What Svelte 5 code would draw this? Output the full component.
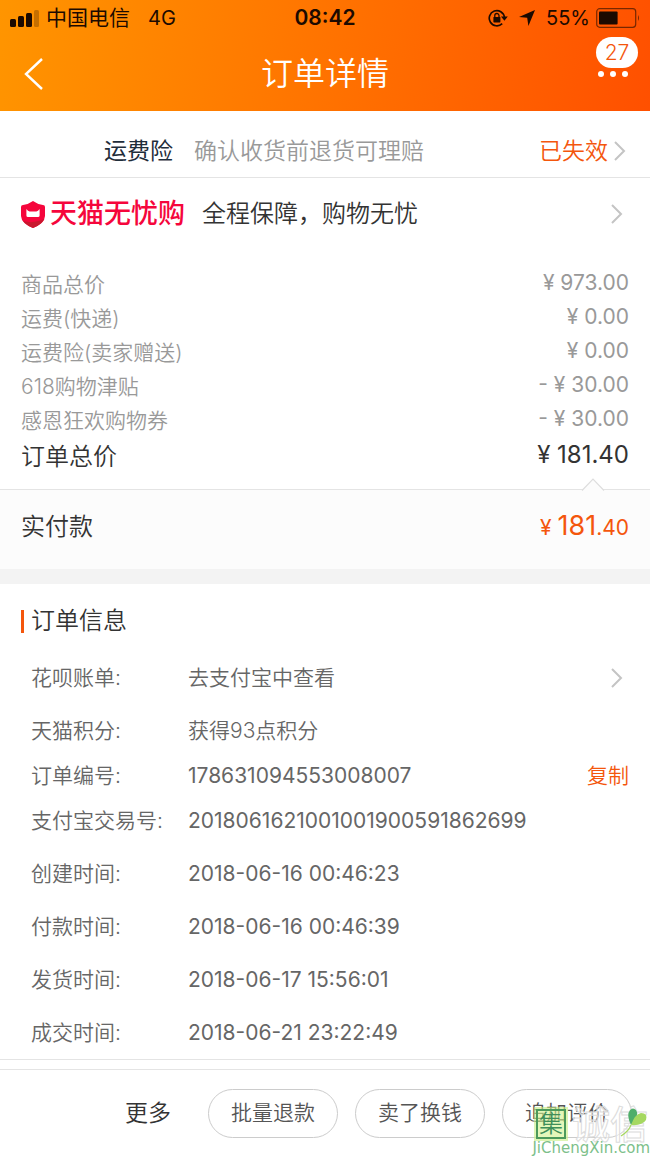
<script>
    const fees = [
        { label: '商品总价', value: '¥ 973.00' },
        { label: '运费(快递)', value: '¥ 0.00' },
        { label: '运费险(卖家赠送)', value: '¥ 0.00' },
        { label: '618购物津贴', value: '- ¥ 30.00' },
        { label: '感恩狂欢购物券', value: '- ¥ 30.00' }
    ];

    // every group is one block, rows in the same block sit closer together
    const groups = [
        [{ label: '花呗账单:', value: '去支付宝中查看', link: true }],
        [
            { label: '天猫积分:', value: '获得93点积分' },
            { label: '订单编号:', value: '178631094553008007', copy: true },
            { label: '支付宝交易号:', value: '2018061621001001900591862699' }
        ],
        [{ label: '创建时间:', value: '2018-06-16 00:46:23' }],
        [{ label: '付款时间:', value: '2018-06-16 00:46:39' }],
        [{ label: '发货时间:', value: '2018-06-17 15:56:01' }],
        [{ label: '成交时间:', value: '2018-06-21 23:22:49' }]
    ];

    const actions = ['批量退款', '卖了换钱', '追加评价'];
</script>

{#snippet chevron()}
    <svg class="chevron" viewBox="0 0 12 20" width="12" height="20" aria-hidden="true">
        <path d="M1 1 L10 10 L1 19" fill="none" stroke="#c4c4c4" stroke-width="2" />
    </svg>
{/snippet}

<main>
    <header>
        <div class="status">
            <div class="carrier">
                <svg viewBox="0 0 30 18" width="30" height="18" aria-hidden="true">
                    <rect x="0" y="10" width="6" height="8" rx="1.5" />
                    <rect x="8" y="7" width="6" height="11" rx="1.5" />
                    <rect x="16" y="4" width="6" height="14" rx="1.5" />
                    <rect x="24" y="1" width="5" height="17" rx="1.5" opacity=".25" />
                </svg>
                <span class="name">中国电信</span>
                <span>4G</span>
            </div>
            <time>08:42</time>
            <div class="power">
                <svg viewBox="0 0 20 18" width="20" height="18" aria-hidden="true">
                    <path d="M14.2 14.6 A7.6 7.6 0 1 1 16.4 8.2" fill="none" stroke="#1c0a00" stroke-width="1.7" />
                    <path d="M13 7.6 H19.8 L16.4 11.8 Z" />
                    <rect x="5.4" y="8" width="7" height="5.4" rx=".6" />
                    <path d="M6.8 8.4 V6.6 A2.1 2.1 0 0 1 11 6.6 V8.4" fill="none" stroke="#1c0a00" stroke-width="1.3" />
                </svg>
                <svg viewBox="0 0 18 18" width="18" height="18" aria-hidden="true">
                    <path d="M17 1 L10.4 17 L9.2 8.8 L1 8 Z" />
                </svg>
                <span>55%</span>
                <svg viewBox="0 0 44 20" width="44" height="20" aria-hidden="true">
                    <rect x=".7" y=".7" width="39" height="18.6" rx="3" fill="none" stroke="#1c0a00" stroke-opacity=".6" stroke-width="1.2" />
                    <rect x="3" y="3.4" width="18.6" height="13.2" rx="1" />
                    <path d="M42 7 Q44 10 42 13 Z" opacity=".6" />
                </svg>
            </div>
        </div>

        <nav>
            <button class="back" aria-label="返回">
                <svg viewBox="0 0 20 32" width="20" height="32" aria-hidden="true">
                    <path d="M18 1 L2 16 L18 31" fill="none" stroke="#fff" stroke-width="2.4" />
                </svg>
            </button>
            <h1>订单详情</h1>
            <button class="menu" aria-label="更多选项">
                <span class="badge">27</span>
                <svg viewBox="0 0 30 6" width="30" height="6" aria-hidden="true">
                    <circle cx="3" cy="3" r="3" />
                    <circle cx="15" cy="3" r="3" />
                    <circle cx="27" cy="3" r="3" />
                </svg>
            </button>
        </nav>
    </header>

    <a class="insurance" href="#insurance">
        <strong>运费险</strong>
        <span class="hint">确认收货前退货可理赔</span>
        <span class="expired">已失效</span>
        {@render chevron()}
    </a>

    <a class="guarantee" href="#guarantee">
        <svg viewBox="0 0 24 27" width="24" height="27" aria-hidden="true">
            <path d="M12 0 Q17 3.6 22 4 Q24 4.2 24 6 V15 Q23.6 22.4 12 27 Q.4 22.4 0 15 V6 Q0 4.2 2 4 Q7 3.6 12 0 Z" fill="#f5063c" />
            <path d="M23.4 18 Q20.5 23.6 12 27 Q5 24.2 2 20 Q13 23 23.4 18 Z" fill="#c8182e" />
            <path d="M5.4 8 Q7 10.4 8.6 10.4 H15.4 Q17 10.4 18.6 8 V14.4 Q18.6 16 17 16 H7 Q5.4 16 5.4 14.4 Z" fill="#fff" />
        </svg>
        <b>天猫无忧购</b>
        <span>全程保障，购物无忧</span>
        {@render chevron()}
    </a>

    <section class="fees">
        <dl>
            {#each fees as fee}
                <div>
                    <dt>{fee.label}</dt>
                    <dd>{fee.value}</dd>
                </div>
            {/each}
            <div class="total">
                <dt>订单总价</dt>
                <dd>¥ 181.40</dd>
            </div>
        </dl>
    </section>

    <section class="paid">
        <svg class="notch" viewBox="0 0 24 13" width="24" height="13" aria-hidden="true">
            <path d="M1 12.5 L12 1 L23 12.5" fill="#fcfcfc" stroke="#dedede" stroke-width="1.2" />
        </svg>
        <span>实付款</span>
        <span class="amount">¥ <big>181</big>.40</span>
    </section>

    <section class="info">
        <h2>订单信息</h2>
        {#each groups as group}
            <dl>
                {#each group as row}
                    <div>
                        <dt>{row.label}</dt>
                        <dd class:number={/^\d/.test(row.value)}>{row.value}</dd>
                        {#if row.link}
                            {@render chevron()}
                        {/if}
                        {#if row.copy}
                            <button class="copy">复制</button>
                        {/if}
                    </div>
                {/each}
            </dl>
        {/each}
    </section>

    <footer>
        <button class="more">更多</button>
        {#each actions as action}
            <button class="pill">{action}</button>
        {/each}

        <div class="watermark">
            <div class="mark">
                <span class="seal">集</span>
                <span class="ghost">诚信</span>
                <svg class="leaf" viewBox="0 0 28 30" width="28" height="30" aria-hidden="true">
                    <path d="M11 18 Q6 8 10 3 Q13 0 16 3 Q20 8 11 18 Z" fill="#4fae6a" />
                    <path d="M11 18 Q15 7 21 6 Q28 6 26 13 Q22 19 11 18 Z" fill="#a5d860" />
                    <path d="M11 18 Q9 24 1 29" fill="none" stroke="#a5d860" stroke-width="1.2" />
                </svg>
            </div>
            <span class="site">JiChengXin.com</span>
        </div>
    </footer>
</main>

<style>
    :global(body) {
        margin: 0;
        background-color: #fff;
    }

    main {
        --orange: #f4560c;
        --line: #e4e4e4;

        font-family: Inter, "Noto Sans CJK SC", sans-serif;
        font-size: 21px;
        font-weight: 350;
        line-height: 34px;
        color: #333;
    }

    h1, h2, dl, dd {
        margin: 0;
        font-weight: inherit;
    }

    button {
        padding: 0;
        border: none;
        background: none;
        font: inherit;
        color: inherit;
        cursor: pointer;
    }

    a {
        color: inherit;
        text-decoration: none;
    }

    svg {
        flex: none;
    }

    /* HEADER */
    header {
        background: linear-gradient(100deg, #ff9500, #ff7a00 40%, #ff5000);
        color: #fff;
    }

    .status {
        display: grid;
        grid-template-columns: 1fr auto 1fr;
        align-items: center;
        height: 36px;
        padding: 0 10px;
        font-size: 20px;
        font-weight: 400;
        color: #1c0a00;
        fill: #1c0a00;
    }

    .status time {
        font-size: 21px;
        font-weight: 600;
    }

    .carrier, .power {
        display: flex;
        align-items: center;
    }

    .carrier .name {
        margin: 0 18px 0 6px;
        font-size: 21px;
    }

    .power {
        justify-content: flex-end;
        gap: 10px;
    }

    .power span {
        margin-right: -4px;
    }

    nav {
        display: grid;
        grid-template-columns: 1fr auto 1fr;
        align-items: center;
        height: 75px;
        padding: 0 22px;
    }

    h1 {
        font-size: 32px;
        line-height: 48px;
    }

    .back {
        display: flex;
        justify-self: start;
        padding: 2px;
    }

    .menu {
        position: relative;
        display: flex;
        justify-self: end;
        fill: #fff;
    }

    .badge {
        position: absolute;
        bottom: 9px;
        right: -10px;
        width: 42px;
        border-radius: 16px;
        background-color: #fff;
        line-height: 31px;
        color: var(--orange);
    }

    /* SERVICES */
    .insurance, .guarantee {
        display: flex;
        align-items: center;
    }

    .insurance {
        height: 52px;
        padding: 14px 24px 0 104px;
        border-bottom: 1px solid var(--line);
        font-size: 23px;
    }

    .insurance strong {
        margin-right: 21px;
        font-weight: 400;
        color: #1f2d3a;
    }

    .hint {
        color: #999;
    }

    .expired {
        margin: 0 6px 0 auto;
        color: var(--orange);
    }

    .guarantee {
        height: 72px;
        padding: 0 27px 0 21px;
        font-size: 24px;
    }

    .guarantee b {
        margin: 0 17px 0 5px;
        font-size: 27px;
        font-weight: 500;
        color: #f5063c;
    }

    .guarantee .chevron {
        margin-left: auto;
    }

    /* PRICES */
    .fees {
        padding: 18px 21px 15px;
        border-bottom: 1px solid var(--line);
    }

    .fees dl div {
        display: flex;
        justify-content: space-between;
        color: #999;
    }

    .fees dd {
        font-weight: 400;
        line-height: 30px;
    }

    .fees .total {
        padding-top: 2px;
        font-size: 24px;
        color: #333;
    }

    .paid {
        position: relative;
        display: flex;
        align-items: center;
        justify-content: space-between;
        height: 74px;
        padding: 0 21px 5px;
        border-bottom: 15px solid #f3f3f3;
        background-color: #fcfcfc;
        font-size: 24px;
    }

    .notch {
        position: absolute;
        right: 45px;
        top: -12px;
    }

    .amount {
        font-size: 21px;
        font-weight: 400;
        color: var(--orange);
    }

    .amount big {
        font-size: 27px;
    }

    /* ORDER INFO */
    .info {
        padding: 20px 21px 4px;
        border-bottom: 1px solid var(--line);
        color: #666;
    }

    h2 {
        display: flex;
        align-items: center;
        gap: 7px;
        margin-bottom: 17px;
        font-size: 24px;
        color: #333;
    }

    h2::before {
        content: "";
        width: 3px;
        height: 23px;
        background-color: var(--orange);
    }

    .info dl {
        margin-bottom: 8px;
        padding-left: 10px;
    }

    .info dl:last-child {
        margin-bottom: 0;
    }

    .info dl div {
        display: grid;
        grid-template-columns: 157px 1fr auto;
        align-items: center;
        height: 45px;
    }

    .number {
        font-weight: 400;
    }

    .info .chevron {
        margin-right: 6px;
    }

    .copy {
        color: var(--orange);
    }

    /* ACTIONS */
    footer {
        position: relative;
        display: flex;
        align-items: center;
        justify-content: flex-end;
        gap: 17px;
        height: 86px;
        margin-top: 9px;
        padding: 0 18px;
        border-top: 1px solid var(--line);
    }

    .more {
        margin-right: 20px;
        font-size: 23px;
    }

    .pill {
        width: 130px;
        height: 49px;
        border: 1px solid #ccc;
        border-radius: 25px;
        color: #555;
    }

    /* WATERMARK */
    .watermark {
        position: absolute;
        right: 0;
        bottom: 0;
        pointer-events: none;
    }

    .mark {
        display: flex;
        align-items: center;
        justify-content: flex-end;
        gap: 6px;
        padding-right: 2px;
    }

    .seal {
        box-sizing: border-box;
        width: 30px;
        border: 2px solid #4c9a5c;
        outline: 2px solid rgba(200, 238, 130, .6);
        background-color: rgba(210, 242, 140, .6);
        font-size: 24px;
        line-height: 26px;
        text-align: center;
        color: #3f8f5a;
    }

    .ghost {
        font-size: 38px;
        font-weight: 500;
        color: rgba(255, 255, 255, .5);
        -webkit-text-stroke: 1px #dcdcdc;
    }

    .leaf {
        position: absolute;
        right: 2px;
        top: 0;
    }

    .site {
        display: block;
        font-family: "DejaVu Sans", sans-serif;
        font-size: 15px;
        font-weight: 400;
        line-height: 15px;
        text-align: right;
        color: #7dbf8a;
    }
</style>
